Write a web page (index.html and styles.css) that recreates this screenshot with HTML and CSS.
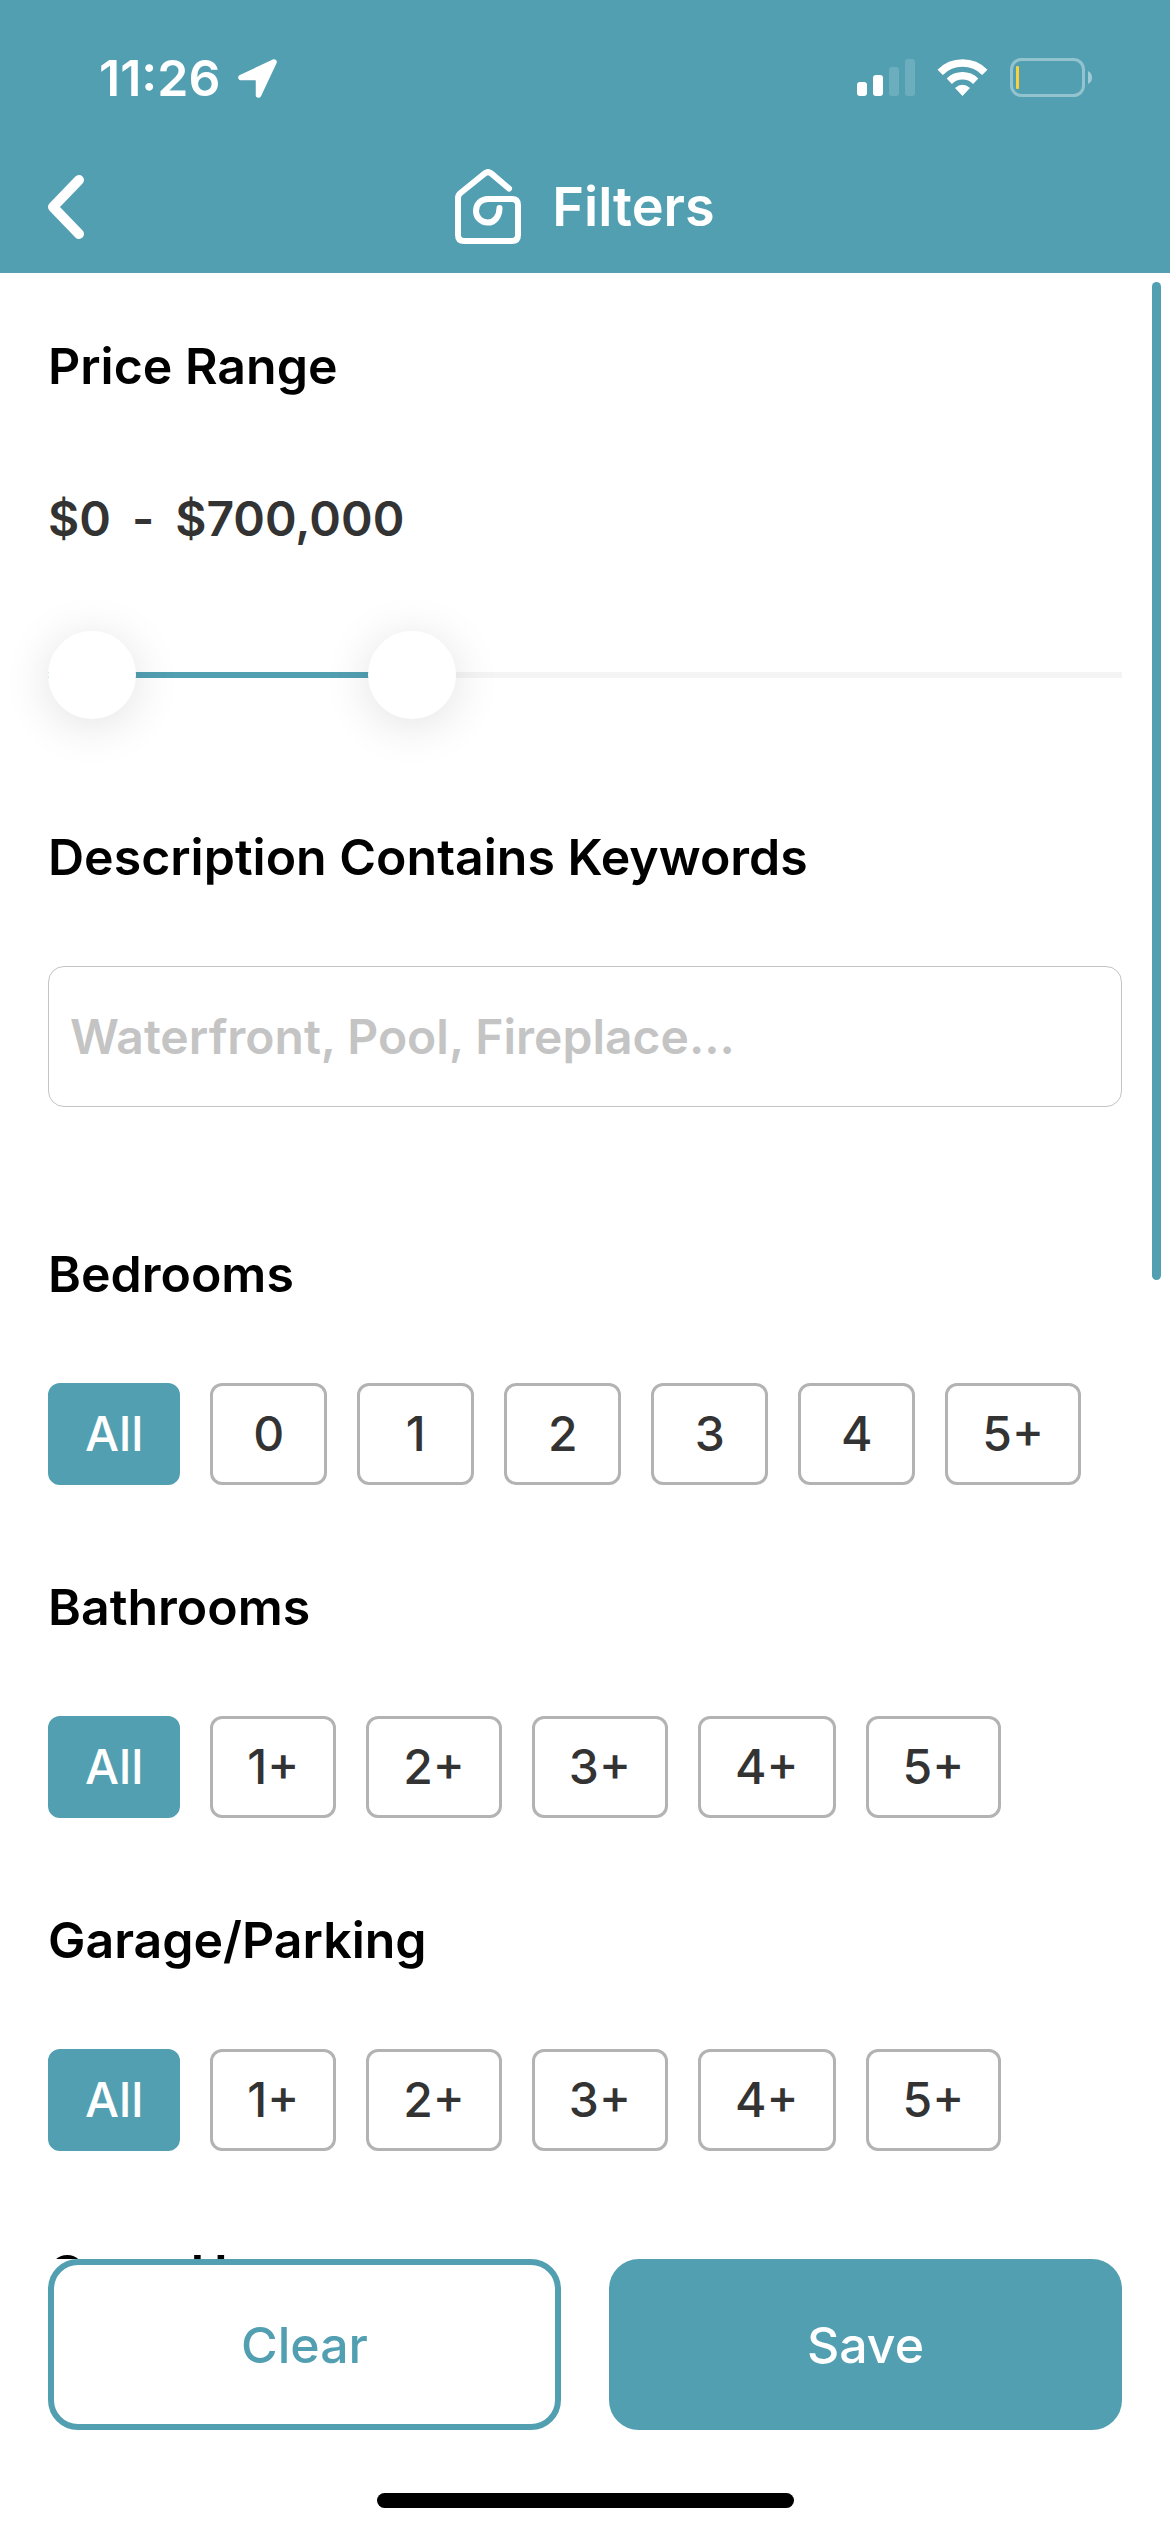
FILE: index.html
```html
<!doctype html>
<html lang="en">
<head>
<meta charset="utf-8" />
<meta name="viewport" content="width=device-width, initial-scale=1" />
<title>Filters</title>
<link rel="stylesheet" href="styles.css">
</head>
<body>
  <header class="header">
    <div class="status">
      <span class="time">11:26</span>
      <svg class="location" width="39" height="39" viewBox="0 0 39 39" aria-hidden="true">
        <path d="M36 3 L3 18.5 H20.5 V36 Z" fill="#fff" stroke="#fff" stroke-width="5.5" stroke-linejoin="round" />
      </svg>
      <div class="status-icons">
        <!-- Signal -->
        <svg width="58" height="40" viewBox="0 0 58 40" fill="#fff" aria-hidden="true">
          <rect x="0" y="24" width="10" height="14" rx="3" />
          <rect x="16" y="17" width="10" height="21" rx="3" />
          <rect x="32" y="9" width="10" height="29" rx="3" opacity="0.16" />
          <rect x="48" y="1" width="10" height="37" rx="3" opacity="0.16" />
        </svg>
        <!-- Wifi -->
        <svg width="51" height="40" viewBox="0 -1 51 40" aria-hidden="true">
          <g fill="none" stroke="#fff" stroke-width="7.5">
            <path d="M3.2 13.3 A31.5 31.5 0 0 1 47.8 13.3" />
            <path d="M12.3 22.2 A19 19 0 0 1 38.7 22.2" />
          </g>
          <path d="M25.5 37 L18 29 Q25.5 22.5 33 29 Z" fill="#fff" />
        </svg>
        <!-- Battery -->
        <svg width="82" height="40" viewBox="0 0 82 40" aria-hidden="true">
          <rect x="1.5" y="1.5" width="72" height="36" rx="10" fill="none" stroke="#fff" stroke-width="3" opacity="0.38" />
          <path d="M78 13 Q82 15 82 19.5 Q82 24 78 26 Z" fill="#fff" opacity="0.45" />
          <rect x="6" y="8" width="3" height="23" rx="1" fill="#fbd13b" />
        </svg>
      </div>
    </div>
    <nav class="nav">
      <button class="back" type="button" aria-label="Back">
        <svg width="36" height="64" viewBox="0 0 36 64" fill="none" stroke="#fff" stroke-width="10" stroke-linecap="round" stroke-linejoin="round">
          <path d="M31 5 L5 32 L31 59" />
        </svg>
      </button>
      <div class="brand">
        <svg width="67" height="76" viewBox="0 0 67 76" fill="none" stroke="#fff" stroke-width="6" stroke-linecap="round" stroke-linejoin="round" aria-hidden="true">
          <path d="M54 19.5 L36.5 4.6 Q33 1.6 29.5 4.6 L5.5 24 Q3 26 3 29 V66 Q3 72 9 72 H57 Q63 72 63 66 V36 Q63 30 57 30 H33 C25.5 30 21 35.5 21 42 C21 48.5 26 53.6 32.7 53.6 C39.5 53.6 44.5 47.5 44.5 39" />
        </svg>
        <h1>Filters</h1>
      </div>
    </nav>
  </header>

  <main class="filters">
    <div class="scroll-thumb"></div>

    <section class="price">
      <h2>Price Range</h2>
      <p class="amounts"><span>$0</span><span>-</span><span>$700,000</span></p>
      <div class="slider">
        <div class="track"><div class="track-fill" style="width:34%"></div></div>
        <input type="range" min="0" max="2160000" step="10000" value="0" aria-label="Minimum price" />
        <input type="range" min="0" max="2160000" step="10000" value="700000" aria-label="Maximum price" />
      </div>
    </section>

    <section class="keywords">
      <h2><label for="keywords">Description Contains Keywords</label></h2>
      <input id="keywords" type="text" placeholder="Waterfront, Pool, Fireplace..." />
    </section>

    <section class="choice" role="radiogroup" aria-labelledby="bedrooms">
      <h2 id="bedrooms">Bedrooms</h2>
      <div class="chips">
        <label class="chip"><input type="radio" name="bedrooms" checked />All</label>
        <label class="chip"><input type="radio" name="bedrooms" />0</label>
        <label class="chip"><input type="radio" name="bedrooms" />1</label>
        <label class="chip"><input type="radio" name="bedrooms" />2</label>
        <label class="chip"><input type="radio" name="bedrooms" />3</label>
        <label class="chip"><input type="radio" name="bedrooms" />4</label>
        <label class="chip"><input type="radio" name="bedrooms" />5+</label>
      </div>
    </section>

    <section class="choice" role="radiogroup" aria-labelledby="bathrooms">
      <h2 id="bathrooms">Bathrooms</h2>
      <div class="chips">
        <label class="chip"><input type="radio" name="bathrooms" checked />All</label>
        <label class="chip"><input type="radio" name="bathrooms" />1+</label>
        <label class="chip"><input type="radio" name="bathrooms" />2+</label>
        <label class="chip"><input type="radio" name="bathrooms" />3+</label>
        <label class="chip"><input type="radio" name="bathrooms" />4+</label>
        <label class="chip"><input type="radio" name="bathrooms" />5+</label>
      </div>
    </section>

    <section class="choice" role="radiogroup" aria-labelledby="garage">
      <h2 id="garage">Garage/Parking</h2>
      <div class="chips">
        <label class="chip"><input type="radio" name="garage" checked />All</label>
        <label class="chip"><input type="radio" name="garage" />1+</label>
        <label class="chip"><input type="radio" name="garage" />2+</label>
        <label class="chip"><input type="radio" name="garage" />3+</label>
        <label class="chip"><input type="radio" name="garage" />4+</label>
        <label class="chip"><input type="radio" name="garage" />5+</label>
      </div>
    </section>

    <section class="choice">
      <h2>Open House</h2>
    </section>
  </main>

  <footer class="footer">
    <div class="actions">
      <button class="btn btn-outline" type="button">Clear</button>
      <button class="btn" type="button">Save</button>
    </div>
    <div class="home-bar"></div>
  </footer>
</body>
</html>
```
FILE: styles.css
```css
:root{
  --teal:#529fb2;
  --text:#333;
  --chip-border:#b3b3b3;
  --placeholder:#c4c4c4;
}
*{box-sizing:border-box;margin:0;padding:0}
body{
  height:100vh;
  display:flex;flex-direction:column;
  background:#fff;color:var(--text);
  font-family:Inter,"Open Sans",sans-serif;
  font-size:48px;line-height:72px;
}
input,button{font:inherit;color:inherit}
svg{display:block}

/* header */
.header{background:var(--teal);color:#fff}
.status{
  display:flex;align-items:center;
  height:141px;padding:15px 78px 0 99px;
}
.time{font-size:50px;font-weight:600}
.location{margin-left:18px}
.status-icons{display:flex;gap:22px;margin-left:auto}
.nav{
  display:grid;grid-template-columns:1fr auto 1fr;align-items:center;
  height:132px;padding:0 48px;
}
.back{justify-self:start;background:none;border:0;cursor:pointer}
.brand{display:flex;align-items:center;gap:30px}
h1{font-size:54px;font-weight:600}

/* filter list */
.filters{
  position:relative;
  flex:1;min-height:0;overflow:hidden;
  padding:57px 48px 0;
}
.scroll-thumb{
  position:absolute;top:9px;right:9px;
  width:9px;height:calc(50% + 5px);
  border-radius:5px;background:var(--teal);
}
h2{font-size:50px;font-weight:600;color:#000}
.price{margin-bottom:102px}
.amounts{display:flex;gap:21px;margin:81px 0 76px;font-weight:600}

.slider{display:grid;align-items:center}
.slider > *{grid-area:1 / 1}
.track{height:6px;background:#f4f4f4}
.track-fill{height:100%;background:var(--teal)}
.slider input{
  appearance:none;
  width:100%;height:88px;
  background:none;pointer-events:none;
}
.slider input::-webkit-slider-thumb{
  appearance:none;
  width:88px;height:88px;
  border-radius:50%;background:#fff;
  box-shadow:0 6px 48px rgba(0,0,0,0.12);
  pointer-events:auto;cursor:pointer;
}

.keywords{margin-bottom:131px}
.keywords h2{margin-bottom:73px}
.keywords input{
  display:block;width:100%;height:141px;
  padding:0 21px;
  border:1px solid var(--placeholder);border-radius:16px;
  background:#fff;font-weight:600;
}
.keywords input::placeholder{color:var(--placeholder)}

.choice{margin-bottom:86px}
.choice h2{margin-bottom:73px}
.chips{display:flex;gap:30px}
.chip{
  min-width:117px;padding:12px 34px;
  border:3px solid var(--chip-border);border-radius:12px;
  font-weight:500;text-align:center;cursor:pointer;
}
.chip input{position:absolute;opacity:0}
.chip:has(input:checked){background:var(--teal);border-color:var(--teal);color:#fff}

/* bottom actions */
.footer{padding:0 48px 24px;background:#fff}
.actions{display:flex;gap:48px}
.btn{
  flex:1;height:171px;
  border:6px solid var(--teal);border-radius:30px;
  background:var(--teal);color:#fff;
  font-size:50px;font-weight:500;cursor:pointer;
}
.btn-outline{background:#fff;color:var(--teal)}
.home-bar{
  width:417px;height:15px;margin:63px auto 0;
  border-radius:8px;background:#000;
}
```
